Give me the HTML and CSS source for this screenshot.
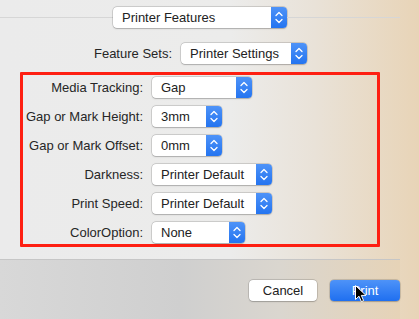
FILE: index.html
```html
<!DOCTYPE html>
<html lang="en">
<head>
    <meta charset="UTF-8">
    <title>Print</title>
    <link rel="stylesheet" href="styles.css">
</head>
<body>
    <div class="sheet">
        <!-- Panel selector -->
        <div class="panel-head">
            <span class="rule"></span>
            <div class="popup popup-panel">
                <span class="popup-text">Printer Features</span>
                <span class="popup-arrows">
                    <svg width="16" height="21" viewBox="0 0 16 21"><path d="M5 8.5 8 5.5 11 8.5M5 12.5 8 15.5 11 12.5"/></svg>
                </span>
            </div>
            <span class="rule"></span>
        </div>

        <div class="feature-sets">
            <label>Feature Sets:</label>
            <div class="popup popup-sets">
                <span class="popup-text">Printer Settings</span>
                <span class="popup-arrows">
                    <svg width="16" height="21" viewBox="0 0 16 21"><path d="M5 8.5 8 5.5 11 8.5M5 12.5 8 15.5 11 12.5"/></svg>
                </span>
            </div>
        </div>

        <!-- Options marked in red -->
        <div class="options">
            <label>Media Tracking:</label>
            <div class="popup w-100">
                <span class="popup-text">Gap</span>
                <span class="popup-arrows"><svg width="16" height="21" viewBox="0 0 16 21"><path d="M5 8.5 8 5.5 11 8.5M5 12.5 8 15.5 11 12.5"/></svg></span>
            </div>

            <label>Gap or Mark Height:</label>
            <div class="popup w-70">
                <span class="popup-text">3mm</span>
                <span class="popup-arrows"><svg width="16" height="21" viewBox="0 0 16 21"><path d="M5 8.5 8 5.5 11 8.5M5 12.5 8 15.5 11 12.5"/></svg></span>
            </div>

            <label>Gap or Mark Offset:</label>
            <div class="popup w-70">
                <span class="popup-text">0mm</span>
                <span class="popup-arrows"><svg width="16" height="21" viewBox="0 0 16 21"><path d="M5 8.5 8 5.5 11 8.5M5 12.5 8 15.5 11 12.5"/></svg></span>
            </div>

            <label>Darkness:</label>
            <div class="popup w-120">
                <span class="popup-text">Printer Default</span>
                <span class="popup-arrows"><svg width="16" height="21" viewBox="0 0 16 21"><path d="M5 8.5 8 5.5 11 8.5M5 12.5 8 15.5 11 12.5"/></svg></span>
            </div>

            <label>Print Speed:</label>
            <div class="popup w-120">
                <span class="popup-text">Printer Default</span>
                <span class="popup-arrows"><svg width="16" height="21" viewBox="0 0 16 21"><path d="M5 8.5 8 5.5 11 8.5M5 12.5 8 15.5 11 12.5"/></svg></span>
            </div>

            <label>ColorOption:</label>
            <div class="popup w-93">
                <span class="popup-text">None</span>
                <span class="popup-arrows"><svg width="16" height="21" viewBox="0 0 16 21"><path d="M5 8.5 8 5.5 11 8.5M5 12.5 8 15.5 11 12.5"/></svg></span>
            </div>
        </div>
    </div>

    <div class="footer">
        <button class="btn">Cancel</button>
        <button class="btn btn-default">Print</button>
        <svg class="cursor" width="13" height="19" viewBox="0 0 13 19"><path d="M1.5 1.5V15.5L5 12.2 7.4 17.6 9.6 16.6 7.3 11.4H12Z"/></svg>
    </div>
</body>
</html>
```

FILE: styles.css
```css
/* Print dialog sheet */
body {
    margin: 0;
    width: 419px;
    height: 319px;
    overflow: hidden;
    font-family: "Liberation Sans", Arial, sans-serif;
    font-size: 13px;
    color: #262626;
    background: linear-gradient(to right, #ebebeb 0%, #ececeb 55%, #e9e2d8 75%, #e8d4b7 100%);
}

.sheet {
    width: 400px;
    padding-top: 7px;
}

.panel-head {
    display: flex;
    align-items: center;
}

.rule {
    flex: 1;
    height: 1px;
    background-color: #d6d6d6;
}

.feature-sets {
    display: flex;
    justify-content: center;
    align-items: center;
    gap: 9px;
    margin-top: 15px;
    padding-left: 1px;
}

/* Popup buttons */
.popup {
    display: flex;
    height: 21px;
    box-sizing: border-box;
    background-color: #fff;
    border-radius: 4px;
    box-shadow: 0 0 0 0.5px rgba(0, 0, 0, 0.22), 0 0.5px 1.5px rgba(0, 0, 0, 0.18);
    overflow: hidden;
}

.popup-text {
    flex: 1;
    padding-left: 9px;
    line-height: 21px;
    color: #222;
    white-space: nowrap;
}

.popup-arrows {
    width: 16px;
    height: 21px;
    background: linear-gradient(#4e93f8, #2474f0);
}

.popup-arrows svg {
    display: block;
}

.popup-arrows path {
    fill: none;
    stroke: #fff;
    stroke-width: 1.3;
    stroke-linecap: round;
    stroke-linejoin: round;
}

.popup-panel {
    width: 174px;
}

.popup-sets {
    width: 126px;
}

.w-100 { width: 100px; }
.w-70 { width: 70px; }
.w-120 { width: 120px; }
.w-93 { width: 93px; }

/* Red annotation box */
.options {
    display: grid;
    grid-template-columns: 120px auto;
    justify-content: start;
    align-items: center;
    column-gap: 9px;
    row-gap: 8px;
    width: 354px;
    margin: 8px 0 0 20px;
    padding: 2px 0 1px;
    border: 3px solid #fe1f12;
    border-radius: 1px;
}

.options label {
    text-align: right;
    white-space: nowrap;
}

.options .popup {
    justify-self: start;
}

/* Bottom buttons */
.footer {
    position: relative;
    box-sizing: border-box;
    height: 60px;
    margin-top: 12px;
    width: 400px;
    border-top: 1px solid #c6c6c6;
    display: flex;
    justify-content: flex-end;
    align-items: flex-start;
    gap: 13px;
    padding-top: 20px;
    background: linear-gradient(to right, #d8d8d8 0%, #cfcfcf 45%, #dad6cf 70%, #e6d3b7 100%);
}

.btn {
    height: 21px;
    padding: 0;
    font-family: inherit;
    font-size: 13px;
    color: #222;
    background-color: #fff;
    border: none;
    border-radius: 4px;
    box-shadow: 0 0 0 0.5px rgba(0, 0, 0, 0.22), 0 0.5px 1.5px rgba(0, 0, 0, 0.18);
    width: 68px;
}

.btn-default {
    width: 70px;
    color: #fff;
    background: linear-gradient(#4e93f8, #1f6ff0);
}

.cursor {
    position: absolute;
    left: 354px;
    top: 24px;
}

.cursor path {
    fill: #000;
    stroke: #fff;
    stroke-width: 1;
    stroke-linejoin: round;
}
```
